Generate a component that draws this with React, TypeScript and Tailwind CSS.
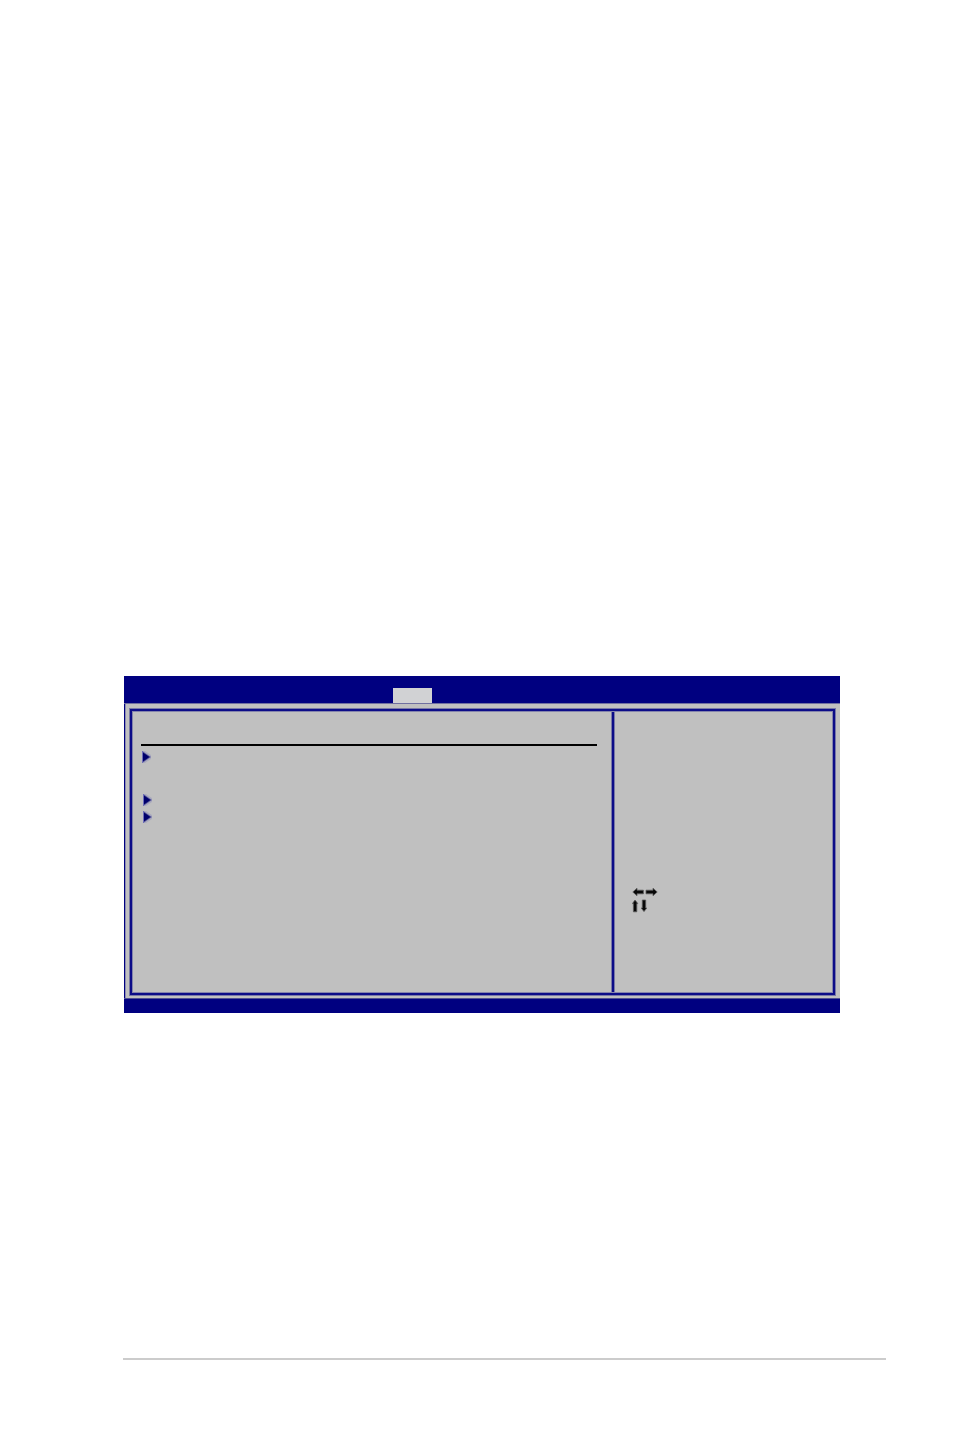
import React from 'react';

// Submenu marker with a lighter fringe around the dark body
function SubmenuMarker() {
  return (
    <svg className="block h-3 w-[10px]" viewBox="0 0 10 12" aria-hidden="true">
      <path d="M0 0h3l6 4v4l-6 4H0z" fill="#aaaabe" />
      <path d="M0 0h1v12H0z" fill="#6c6cb8" />
      <path d="M1 0.5L9 6L1 11.5z" fill="#5c5c9c" />
      <path d="M1 1.5L7.5 6L1 10.5z" fill="#00006c" />
    </svg>
  );
}

function HorizontalArrows() {
  return (
    <svg className="block h-[10px] w-[26px]" viewBox="0 0 26 10" aria-hidden="true">
      <g fill="#080808" stroke="#5c5c5c" strokeWidth="0.8" strokeLinejoin="round">
        <path d="M0.8 5L5 1.2V3.2H11.4V6.8H5V8.8z" />
        <path d="M25.2 5L21 1.2V3.2H14V6.8H21V8.8z" />
      </g>
    </svg>
  );
}

function VerticalArrows() {
  return (
    <svg className="block h-[14px] w-4" viewBox="0 0 16 14" aria-hidden="true">
      <g fill="#080808" stroke="#5c5c5c" strokeWidth="0.8" strokeLinejoin="round">
        <path d="M3 1L5.8 4.6H4.8V12.8H1.4V4.6H0.4z" />
        <path d="M12 12.6L9.2 9H10.3V1H13.7V9H14.8z" />
      </g>
    </svg>
  );
}

function MenuItems() {
  return (
    <ul className="flex flex-col pt-[2px]">
      <li className="flex h-[17px] items-center pl-px">
        <SubmenuMarker />
      </li>
      <li className="mt-[26px] flex h-[17px] items-center pl-[2px]">
        <SubmenuMarker />
      </li>
      <li className="flex h-[17px] items-center pl-[2px]">
        <SubmenuMarker />
      </li>
    </ul>
  );
}

function SetupScreen() {
  return (
    <section className="bg-[#c0c0c0]">
      {/* Menu bar */}
      <header className="flex h-7 flex-col justify-end border-b border-[#7070a0] bg-[#000080] pl-[269px]">
        <button
          type="button"
          aria-label="Active menu"
          className="block h-[15px] w-[39px] bg-[#d1d2d4]"
        />
      </header>

      <div className="border-l border-[#000080]">
        <div className="border-l border-[#8c8cb0] pb-[2px] pl-[3px] pr-1 pt-1">
          <div className="border border-[#7878a8]">
            <div className="border-2 border-[#0c0c88]">
              <div className="flex min-h-[282px] border border-[#8484ac]">
                <div className="flex-1 pl-2 pr-[14px] pt-8">
                  <hr className="h-[2px] border-0 bg-black" />
                  <MenuItems />
                </div>

                <div className="border-x border-[#7878a8] bg-[#0c0c88]">
                  <div className="w-[2px]" />
                </div>

                {/* Key legend */}
                <aside className="w-[217px] pl-[17px] pt-[175px]">
                  <HorizontalArrows />
                  <div className="pt-[2px]">
                    <VerticalArrows />
                  </div>
                </aside>
              </div>
            </div>
          </div>
        </div>
      </div>

      <footer className="h-[15px] border-t border-[#505094] bg-[#000080]" />
    </section>
  );
}

export default function App() {
  return (
    <div className="flex min-h-screen flex-col bg-white pt-[676px]">
      <main className="pl-[124px] pr-[114px]">
        <SetupScreen />
      </main>
      <div className="mt-auto pb-[77px] pl-[123px] pr-[68px]">
        <hr className="h-[2px] border-0 bg-[#cccccc]" />
      </div>
    </div>
  );
}
